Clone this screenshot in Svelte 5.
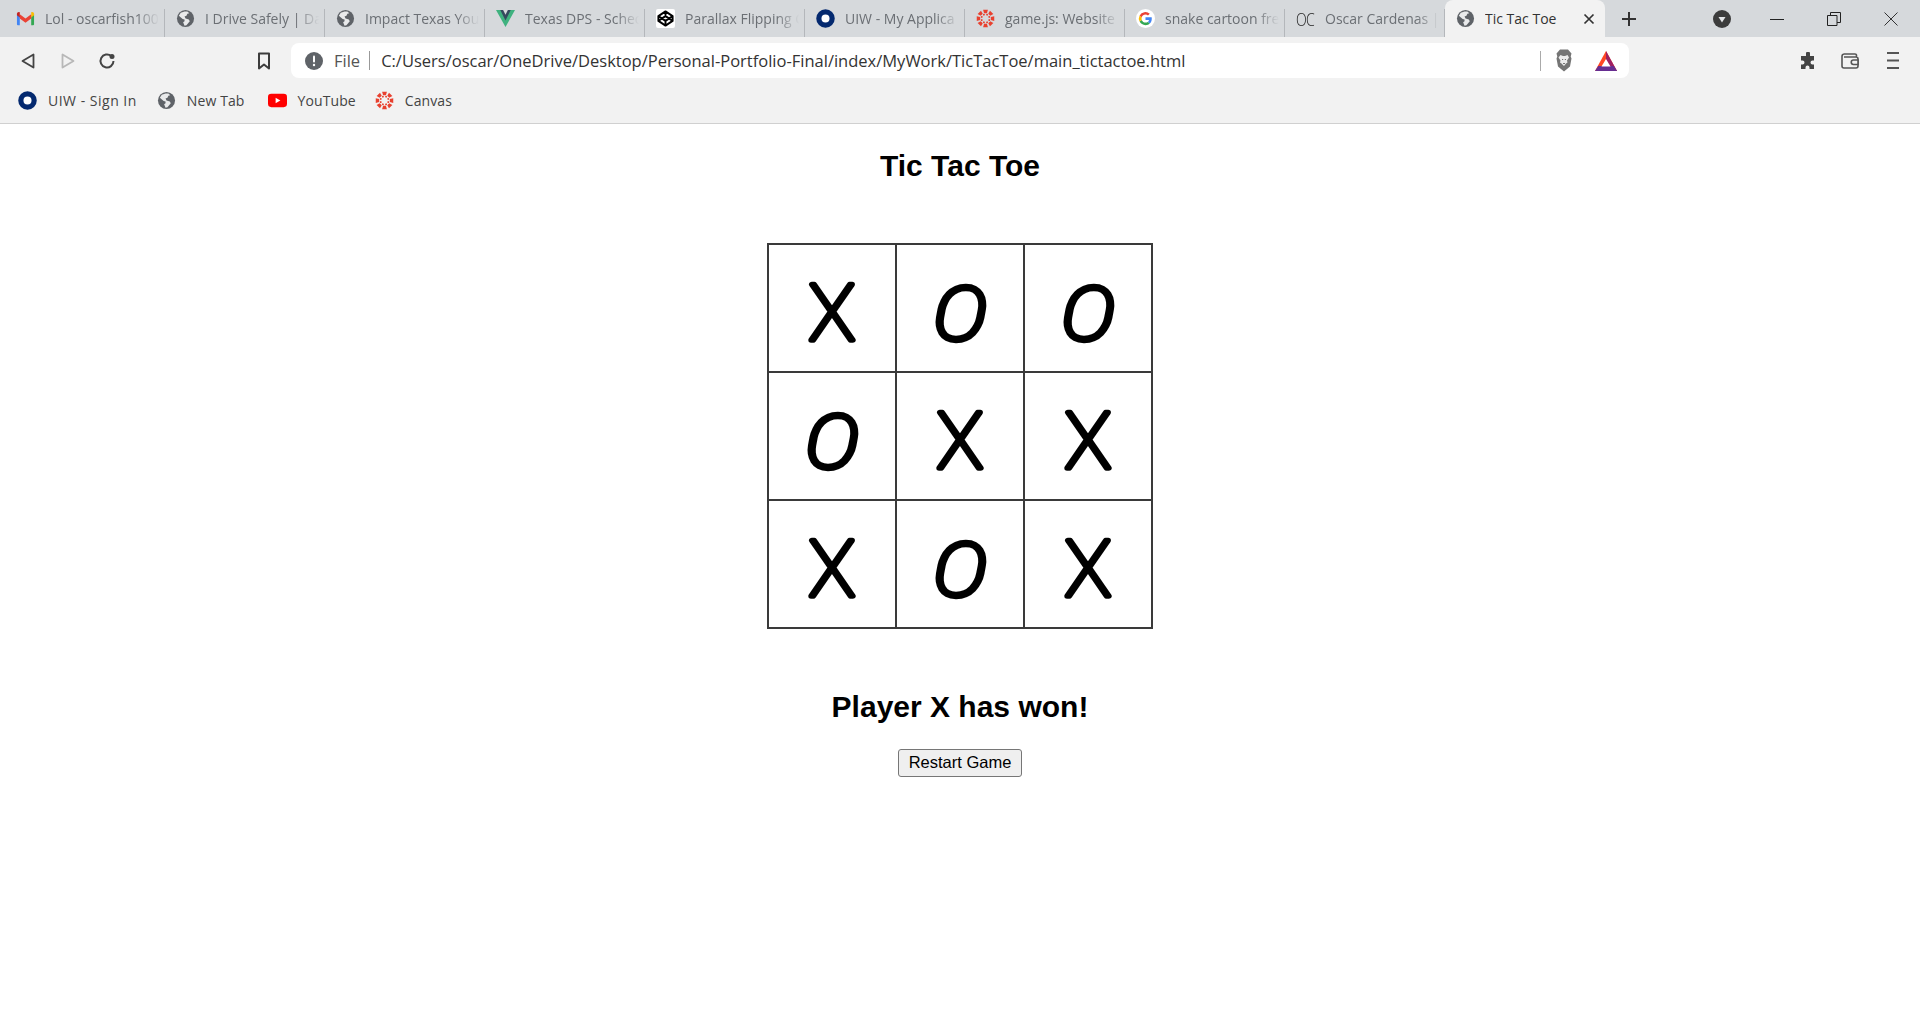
<script>
  const tabs = [
    { title: 'Lol - oscarfish100', icon: 'gmail' },
    { title: 'I Drive Safely | Da', icon: 'globe' },
    { title: 'Impact Texas Your', icon: 'globe' },
    { title: 'Texas DPS - Sched', icon: 'vee' },
    { title: 'Parallax Flipping C', icon: 'codepen' },
    { title: 'UIW - My Applica', icon: 'uiw' },
    { title: 'game.js: Website', icon: 'canvas' },
    { title: 'snake cartoon fre', icon: 'google' },
    { title: 'Oscar Cardenas |', icon: 'oc' }
  ];

  const bookmarks = [
    { title: 'UIW - Sign In', icon: 'uiw' },
    { title: 'New Tab', icon: 'globe' },
    { title: 'YouTube', icon: 'youtube' },
    { title: 'Canvas', icon: 'canvas' }
  ];

  const board = ['X', 'O', 'O', 'O', 'X', 'X', 'X', 'O', 'X'];
  const dots = [0, 45, 90, 135, 180, 225, 270, 315];
</script>

{#snippet favicon(name)}
  {#if name === 'gmail'}
    <svg class="fav" viewBox="0 0 20 20">
      <path d="M1 17V5l3 2v10H2a1 1 0 0 1-1-1z" fill="#4285f4" />
      <path d="M19 17V5l-3 2v10h2a1 1 0 0 0 1-1z" fill="#34a853" />
      <path d="M4 10V5.500L10 10l6-4.500V10l-6 4.500z" fill="#ea4335" />
      <path d="M1 6.500V5a2 2 0 0 1 3-1.500L4 9z" fill="#c5221f" />
      <path d="M19 6.500V5a2 2 0 0 0-3-1.500V9z" fill="#fbbc04" />
    </svg>
  {:else if name === 'globe'}
    <svg class="fav" viewBox="0 0 20 20">
      <circle cx="10" cy="10" r="9" fill="#5f6368" />
      <path d="M9 2.500 5 4 3 7l4 3.500 2 .5v2l-1.500 1L9 17.500l2-.5 3.500-4-1-2-3.500-1-1-2 2-1 1-2 2-.5L12 2.500z" fill="#f0f1f2" opacity=".95" />
    </svg>
  {:else if name === 'vee'}
    <svg class="fav" viewBox="0 0 20 20">
      <path d="M0 1h6.500L10 8l3.500-7H20L10 19z" fill="#3fb27f" />
      <path d="M4.500 1H7.500L10 6l2.500-5h3L10 12z" fill="#35495e" />
    </svg>
  {:else if name === 'codepen'}
    <svg class="fav" viewBox="0 0 20 20">
      <rect width="20" height="20" rx="2" fill="#fff" />
      <path d="M10 2.500 17.500 7.500v5L10 17.500 2.500 12.500v-5z M2.500 7.500 10 12.500l7.500-5 M2.500 12.500 10 7.500l7.500 5 M10 2.500v5 M10 12.500v5" fill="none" stroke="#000" stroke-width="2" stroke-linejoin="round" />
    </svg>
  {:else if name === 'uiw'}
    <svg class="fav" viewBox="0 0 20 20">
      <circle cx="10" cy="10" r="7" fill="#fff" stroke="#04296f" stroke-width="5.500" />
    </svg>
  {:else if name === 'canvas'}
    <svg class="fav" viewBox="0 0 20 20">
      {#each dots as a}
        <g transform="rotate({a} 10 10)">
          <path d="M7.500 .8h5l-1 3.600h-3z" fill="#e8412f" />
        </g>
        <g transform="rotate({a + 22.500} 10 10)">
          <circle cx="10" cy="5.700" r="1" fill="#e8412f" />
        </g>
      {/each}
    </svg>
  {:else if name === 'google'}
    <svg class="fav" viewBox="0 0 20 20">
      <circle cx="10" cy="10" r="10" fill="#fff" />
      <path d="M16.600 10.200c0-.5 0-1-.1-1.400H10v2.700h3.700a3.200 3.200 0 0 1-1.400 2.100l2.200 1.700c1.300-1.200 2.100-3 2.100-5.100z" fill="#4285f4" />
      <path d="M10 17c1.900 0 3.400-.6 4.500-1.700l-2.200-1.700c-.6.400-1.400.7-2.300.7-1.800 0-3.300-1.200-3.900-2.800L3.800 13.200C4.900 15.500 7.300 17 10 17z" fill="#34a853" />
      <path d="M6.100 11.500a4.200 4.200 0 0 1 0-2.900L3.800 6.800a7 7 0 0 0 0 6.400z" fill="#fbbc04" />
      <path d="M10 5.800c1 0 1.900.4 2.600 1l1.900-1.900A7 7 0 0 0 3.800 6.800l2.300 1.800C6.700 7 8.200 5.800 10 5.800z" fill="#ea4335" />
    </svg>
  {:else if name === 'youtube'}
    <svg class="fav" viewBox="0 0 20 20">
      <rect x="0" y="3" width="20" height="14" rx="3.500" fill="#f00" />
      <path d="M8 7v6l5-3z" fill="#fff" />
    </svg>
  {:else if name === 'oc'}
    <span class="oc-box"><span class="oc">OC</span></span>
  {/if}
{/snippet}

<div class="browser">
  <div class="tabstrip">
    {#each tabs as tab}
      <div class="tab">
        {@render favicon(tab.icon)}
        <span class="tab-title">{tab.title}</span>
      </div>
    {/each}
    <div class="tab active">
      {@render favicon('globe')}
      <span class="tab-title">Tic Tac Toe</span>
      <svg class="tab-close" viewBox="0 0 12 12"><path d="M1.500 1.500l9 9m0-9l-9 9" stroke="#333" stroke-width="1.700" fill="none" /></svg>
    </div>
    <svg class="new-tab" viewBox="0 0 16 16"><path d="M8 1v14M1 8h14" stroke="#333" stroke-width="2" fill="none" /></svg>
    <svg class="tab-search" viewBox="0 0 18 18">
      <circle cx="9" cy="9" r="9" fill="#3c3c3c" />
      <path d="M5.500 7h7L9 12.500z" fill="#e4e6e8" />
    </svg>
    <div class="win-buttons">
      <svg viewBox="0 0 14 14"><path d="M0 7.500h14" stroke="#222" stroke-width="1" /></svg>
      <svg viewBox="0 0 14 14"><path d="M.5 3.500h9.500v10H.5zM3.500 3.500V.5h10v10H10" stroke="#222" stroke-width="1" fill="none" /></svg>
      <svg viewBox="0 0 14 14"><path d="M.5.500l13 13m0-13l-13 13" stroke="#333" stroke-width="1" fill="none" /></svg>
    </div>
  </div>

  <div class="toolbar">
    <svg class="nav first" viewBox="0 0 14 16"><path d="M12.500 1.500v13L1.500 8z" fill="none" stroke="#444" stroke-width="1.800" stroke-linejoin="round" /></svg>
    <svg class="nav" viewBox="0 0 14 16"><path d="M1.500 1.500v13l11-6.500z" fill="none" stroke="#b8b8b8" stroke-width="1.800" stroke-linejoin="round" /></svg>
    <svg class="nav" viewBox="0 0 18 18"><path d="M15.500 9a6.500 6.500 0 1 1-2.200-4.900" fill="none" stroke="#444" stroke-width="2" /><circle cx="14" cy="4.500" r="2.500" fill="#444" /></svg>
    <svg class="bookmark" viewBox="0 0 14 18"><path d="M2 1.500h10v15l-5-4-5 4z" fill="none" stroke="#3c3c3c" stroke-width="2" stroke-linejoin="round" /></svg>
    <div class="omnibox">
      <svg class="info" viewBox="0 0 18 18">
        <circle cx="9" cy="9" r="9" fill="#5f6368" />
        <rect x="8" y="3.500" width="2" height="7" rx="1" fill="#fff" />
        <circle cx="9" cy="13" r="1.200" fill="#fff" />
      </svg>
      <span class="scheme">File</span>
      <span class="url">C:/Users/oscar/OneDrive/Desktop/Personal-Portfolio-Final/index/MyWork/TicTacToe/main_tictactoe.html</span>
      <span class="omni-sep"></span>
      <svg class="brave" viewBox="0 0 16 23">
        <path d="M4 .5h8l3.500 4-.8 3 .8 2-1.500 8L8 22.500 2 17.500.5 9.500l.8-2-.8-3z" fill="#757575" />
        <path d="M4.500 6l2.500 1h2l2.500-1 1.500 2.500-2 3 .5 2-1.500 1L8 17l-2.500-2.500-1.500-1 .5-2-2-3z" fill="#ececec" />
        <path d="M6 10.500h1.200M8.800 10.500H10M7 15l1-1 1 1" stroke="#757575" stroke-width="1" fill="none" />
      </svg>
      <svg class="bat" viewBox="0 0 22 20">
        <path d="M11 0 22 20H0z" fill="#ff4724" />
        <path d="M11 0 22 20h-6.500L11 9z" fill="#9e1f63" />
        <path d="M0 20l3.200-5h15.600L22 20z" fill="#662d91" />
        <path d="M11 8l4.500 7.500h-9z" fill="#fff" />
      </svg>
    </div>
    <svg class="tool puzzle" viewBox="0 0 18 18"><path d="M7 1.500a2 2 0 0 1 4 0V4h4v4.500h-1.500a2 2 0 0 0 0 4H15V17H10.500v-1.500a2 2 0 0 0-4 0V17H2v-4.500h1.500a2 2 0 0 0 0-4H2V4h5z" fill="#444" /></svg>
    <svg class="tool wallet" viewBox="0 0 18 16"><path d="M3 1h11a1.500 1.500 0 0 1 1.500 1.500V4M1 3.500A2.500 2.500 0 0 1 3 1M1 3.500v9.500a2 2 0 0 0 2 2h12a2 2 0 0 0 2-2V6a2 2 0 0 0-2-2H3" fill="none" stroke="#555" stroke-width="1.600" /><path d="M12.500 7h4.500v4.500h-4.500a2.200 2.200 0 0 1 0-4.500z" fill="#f2f2f2" stroke="#555" stroke-width="1.600" /></svg>
    <svg class="tool menu" viewBox="0 0 12 17"><path d="M0 1h12M0 8.500h12M0 16h12" stroke="#555" stroke-width="2" /></svg>
  </div>

  <div class="bookmarks">
    {#each bookmarks as mark}
      <div class="mark">
        {@render favicon(mark.icon)}
        <span>{mark.title}</span>
      </div>
    {/each}
  </div>
</div>

<main class="game">
  <h1>Tic Tac Toe</h1>
  <div class="board">
    {#each board as value}
      <div class="cell">
        <svg viewBox="0 0 126 126">
          <text class:slant={value === 'O'} x="63" y="95" text-anchor="middle">{value}</text>
        </svg>
      </div>
    {/each}
  </div>
  <h2>Player X has won!</h2>
  <button>Restart Game</button>
</main>

<style>
  :global(body) {
    margin: 0;
    background: #fff;
  }
  .browser {
    font-family: "Open Sans", sans-serif;
    color: #444;
    border-bottom: 1px solid #d0d0d0;
  }
  .fav {
    width: 19px;
    height: 19px;
    flex-shrink: 0;
  }
  .oc-box {
    width: 19px;
    flex-shrink: 0;
    display: block;
  }
  .oc {
    display: inline-block;
    font-size: 18px;
    font-weight: 300;
    color: #222;
    letter-spacing: -1px;
    transform: scaleX(0.78);
    transform-origin: left center;
  }
  .tabstrip {
    display: flex;
    align-items: center;
    height: 37px;
    padding-left: 5px;
    background: #d6d9dc;
  }
  .tab {
    position: relative;
    display: flex;
    align-items: center;
    gap: 10px;
    box-sizing: border-box;
    width: 160px;
    height: 37px;
    padding: 0 6px 0 11px;
    color: #6b6f74;
    font-size: 14px;
  }
  .tab::after {
    content: '';
    position: absolute;
    right: 0;
    top: 9px;
    bottom: 0;
    width: 1px;
    background: #b4b7bb;
  }
  .tab-title {
    flex: 1;
    overflow: hidden;
    white-space: nowrap;
    -webkit-mask-image: linear-gradient(90deg, #000 80%, transparent);
    mask-image: linear-gradient(90deg, #000 80%, transparent);
  }
  .tab.active {
    background: #f2f2f2;
    color: #333;
    border-radius: 8px 8px 0 0;
  }
  .tab.active::after {
    display: none;
  }
  .tab.active .tab-title {
    -webkit-mask-image: none;
    mask-image: none;
  }
  .tab-close {
    width: 12px;
    height: 12px;
    margin-right: 4px;
  }
  .new-tab {
    width: 16px;
    height: 16px;
    margin-left: 16px;
  }
  .tab-search {
    width: 18px;
    height: 18px;
    margin-left: 76px;
  }
  .win-buttons {
    display: flex;
    gap: 43px;
    margin-left: 39px;
  }
  .win-buttons svg {
    width: 14px;
    height: 14px;
  }
  .toolbar {
    display: flex;
    align-items: center;
    height: 47px;
    background: #f2f2f2;
  }
  .nav {
    width: 14px;
    height: 16px;
    margin-right: 26px;
  }
  .nav.first {
    margin-left: 21px;
  }
  .nav:nth-child(3) {
    width: 18px;
    height: 18px;
    margin-left: -3px;
    margin-right: 0;
  }
  .bookmark {
    width: 14px;
    height: 18px;
    margin-left: 141px;
    margin-right: 20px;
  }
  .omnibox {
    display: flex;
    align-items: center;
    box-sizing: border-box;
    width: 1338px;
    height: 35px;
    padding: 0 12px 0 14px;
    background: #fff;
    border-radius: 8px;
    font-size: 16.500px;
  }
  .info {
    width: 18px;
    height: 18px;
    margin-right: 11px;
  }
  .scheme {
    padding-right: 9px;
    border-right: 1px solid #999;
    line-height: 19px;
    color: #555;
  }
  .url {
    flex: 1;
    margin-left: 11px;
    color: #333;
    white-space: nowrap;
  }
  .omni-sep {
    width: 1px;
    height: 20px;
    background: #aaa;
  }
  .brave {
    width: 16px;
    height: 23px;
    margin-left: 15px;
  }
  .bat {
    width: 22px;
    height: 20px;
    margin-left: 23px;
  }
  .tool {
    height: 18px;
    flex-shrink: 0;
  }
  .puzzle {
    width: 18px;
    margin-left: 170px;
  }
  .wallet {
    width: 18px;
    height: 16px;
    margin-left: 24px;
  }
  .menu {
    width: 12px;
    height: 17px;
    margin-left: 28px;
  }
  .bookmarks {
    display: flex;
    align-items: center;
    gap: 23px;
    box-sizing: border-box;
    height: 39px;
    padding: 0 0 6px 18px;
    background: #f2f2f2;
    font-size: 14px;
    letter-spacing: 0.1px;
    color: #444;
  }
  .mark {
    display: flex;
    align-items: center;
    gap: 11px;
  }
  .mark:first-child {
    letter-spacing: 0.5px;
  }
  .mark:first-child span {
    margin-right: -3px;
  }
  .mark:last-child {
    margin-left: -4px;
  }
  .game {
    display: flex;
    flex-direction: column;
    align-items: center;
    font-family: "Liberation Sans", Arial, sans-serif;
    color: #000;
  }
  h1 {
    margin: 25px 0 60px;
    font-size: 30px;
    line-height: 34px;
  }
  .board {
    display: grid;
    grid-template-columns: repeat(3, 126px);
    gap: 2px;
    padding: 2px;
    background: #3a3a3a;
  }
  .cell {
    height: 126px;
    background: #fff;
  }
  .cell svg {
    display: block;
    width: 126px;
    height: 126px;
  }
  .cell text {
    font-family: Roboto, sans-serif;
    font-weight: 100;
    font-size: 77px;
    fill: #000;
    stroke: #000;
    stroke-width: 5.500;
    stroke-linejoin: round;
    stroke-linecap: round;
  }
  .cell text.slant {
    font-style: italic;
    font-size: 74px;
    transform: scaleX(1.1);
    transform-origin: 63px 63px;
  }
  h2 {
    margin: 61px 0 25px;
    font-size: 30px;
    line-height: 34px;
  }
  button {
    box-sizing: border-box;
    width: 124px;
    height: 28px;
    padding: 0 0 2px;
    background: #efefef;
    border: 1px solid #767676;
    border-radius: 3px;
    font-family: "Liberation Sans", Arial, sans-serif;
    font-size: 16.500px;
    color: #000;
  }
</style>
